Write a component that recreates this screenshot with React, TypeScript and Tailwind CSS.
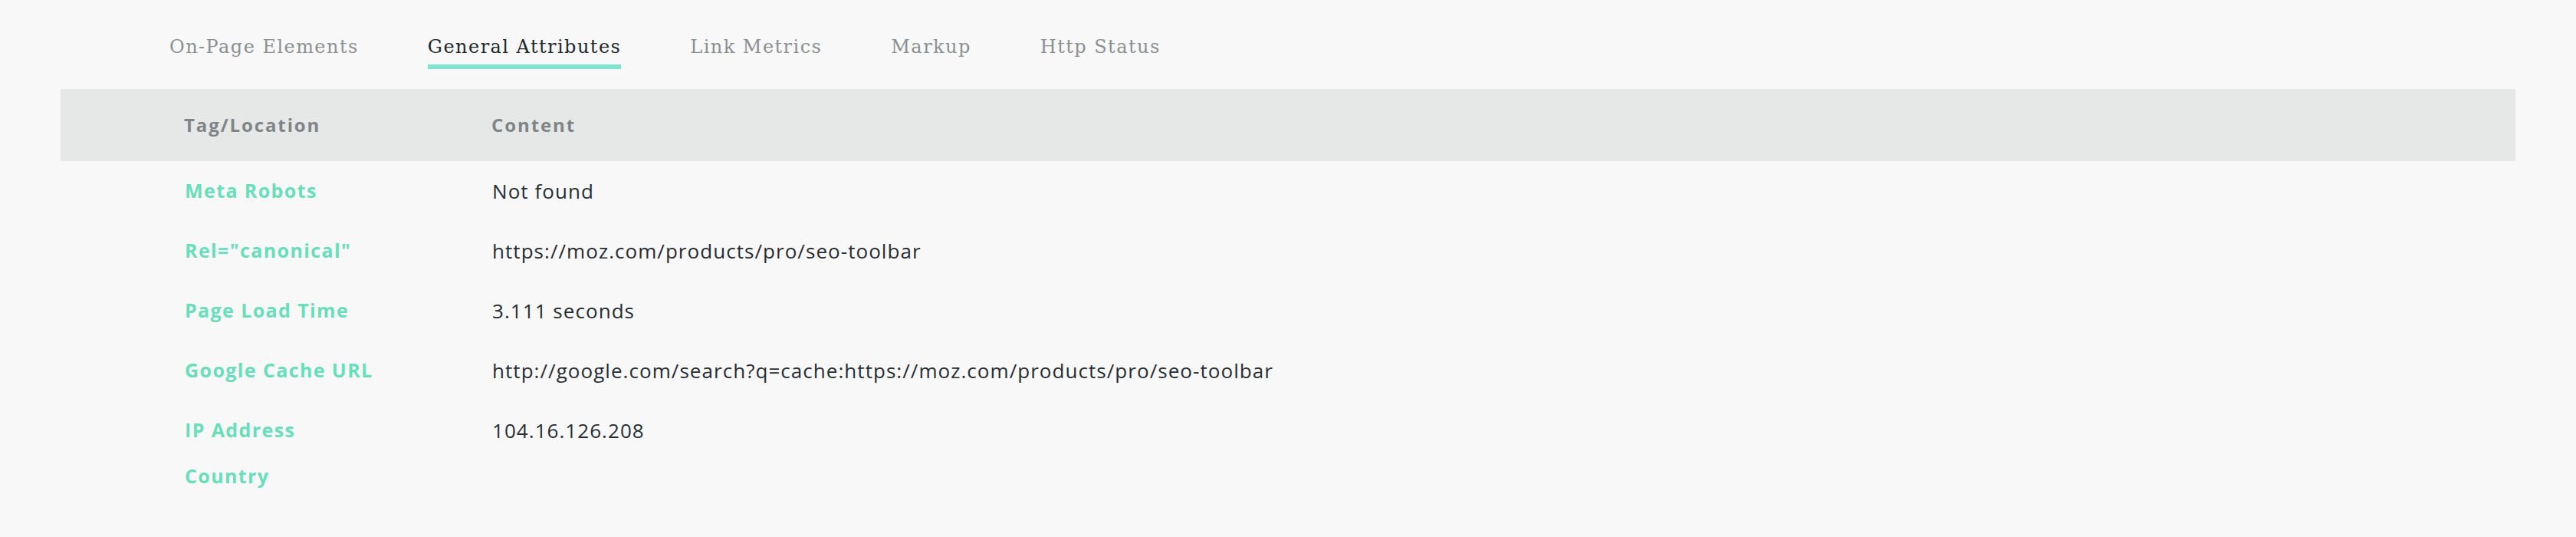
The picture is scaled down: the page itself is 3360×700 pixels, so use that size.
const tabs = [
	{ id: 1, name: 'On-Page Elements', active: false },
	{ id: 2, name: 'General Attributes', active: true },
	{ id: 3, name: 'Link Metrics', active: false },
	{ id: 4, name: 'Markup', active: false },
	{ id: 5, name: 'Http Status', active: false },
]

const rows = [
	{ id: 1, tag: 'Meta Robots', content: 'Not found' },
	{ id: 2, tag: 'Rel="canonical"', content: 'https://moz.com/products/pro/seo-toolbar' },
	{ id: 3, tag: 'Page Load Time', content: '3.111 seconds' },
	{ id: 4, tag: 'Google Cache URL', content: 'http://google.com/search?q=cache:https://moz.com/products/pro/seo-toolbar' },
	{ id: 5, tag: 'IP Address', content: '104.16.126.208' },
	{ id: 6, tag: 'Country', content: '' },
]

export default function App() {
	return (
		<div className="min-h-[700px] w-full bg-[#f8f8f8] font-['Open_Sans',sans-serif]">
			<div className="mx-[79px]">
				<nav className="h-[116px] pl-[142px]">
					<ul className="flex gap-[90px] pt-[46px] font-['DejaVu_Serif',serif] text-[24px] tracking-[1.45px]">
						{tabs.map(({ id, name, active }) => (
							<li key={id} className="flex flex-col">
								<span className={`leading-[30px] ${active ? 'text-[#1f282d]' : 'text-[#8a9093]'}`}>{name}</span>
								<span className={`mt-[8px] h-[6px] w-full ${active ? 'bg-[#7fe5cf]' : 'bg-transparent'}`}></span>
							</li>
						))}
					</ul>
				</nav>

				<div className="flex h-[94px] items-center bg-[#e6e8e7] pl-[161px] text-[24px] font-bold tracking-[1.9px] text-[#7f8587]">
					<div className="w-[401px]">Tag/Location</div>
					<div>Content</div>
				</div>

				<div className="pl-[162px]">
					{rows.map(({ id, tag, content }) => (
						<div key={id} className={`flex items-center ${content ? 'h-[78px]' : 'h-[42px]'}`}>
							<div className="w-[401px] text-[25px] font-bold tracking-[1.4px] text-[#67dfbb]">{tag}</div>
							<div className="text-[26px] tracking-[1.05px] text-[#262d32]">{content}</div>
						</div>
					))}
				</div>
			</div>
		</div>
	)
}
